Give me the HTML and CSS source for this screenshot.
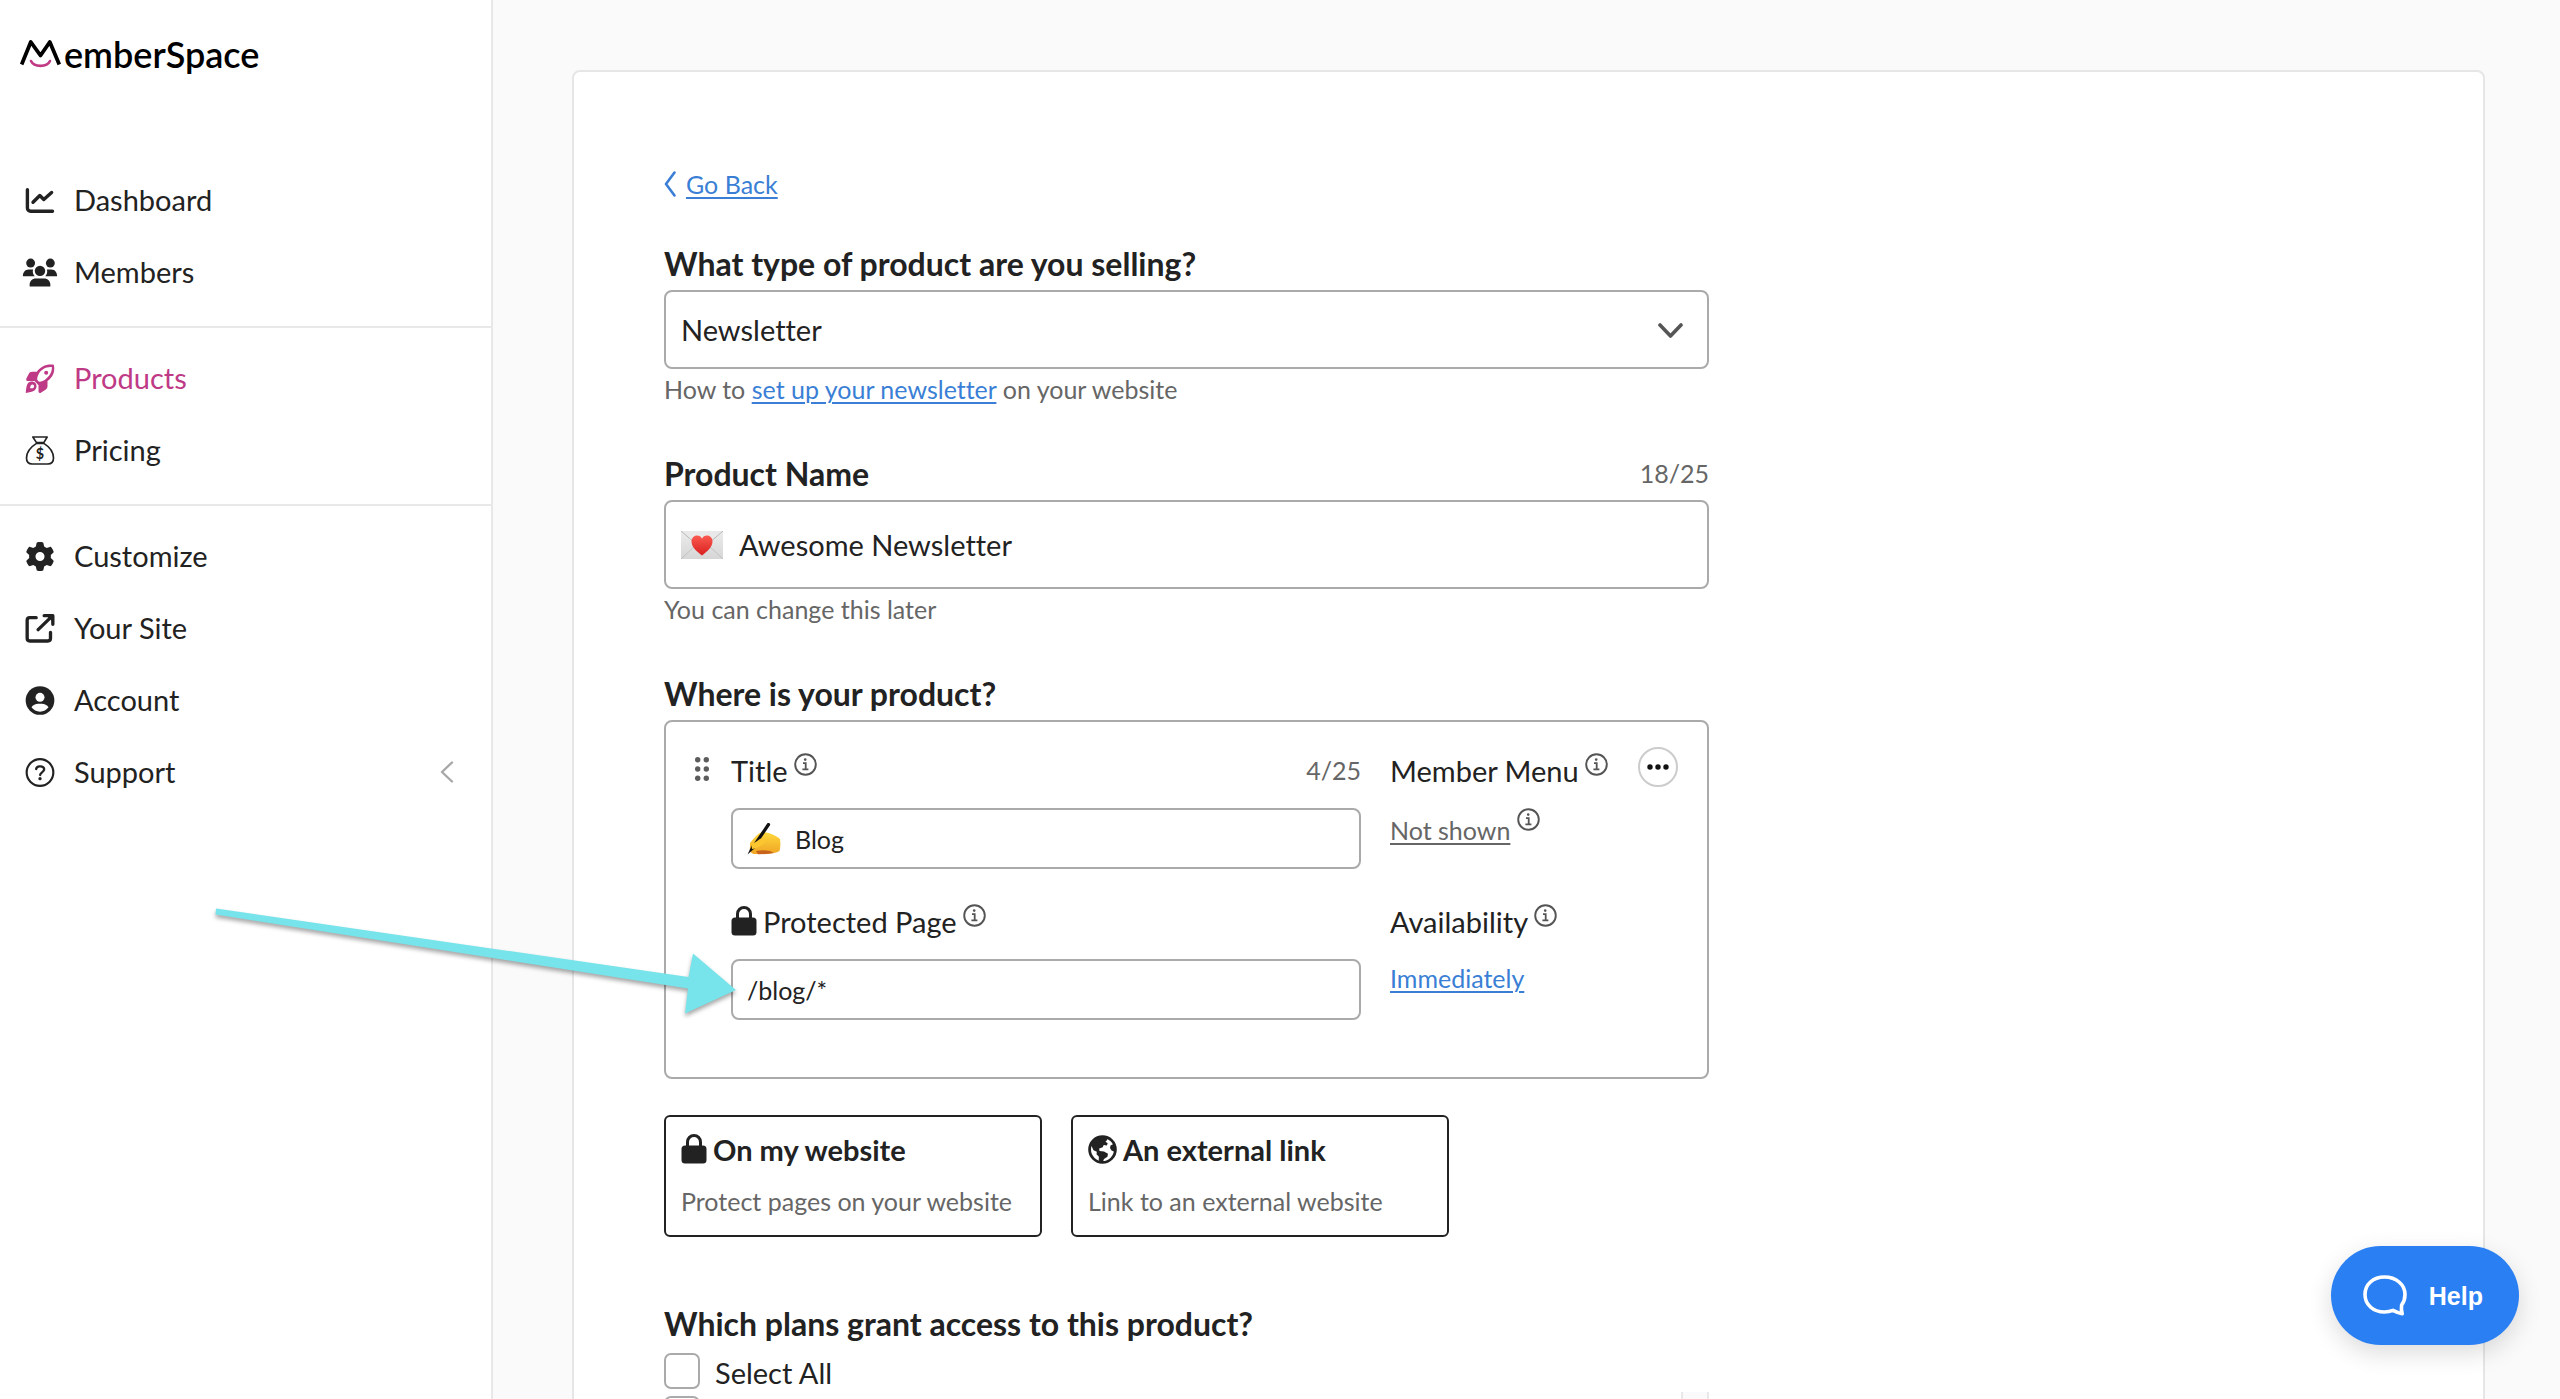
FILE: index.html
```html
<!DOCTYPE html>
<html lang="en">
<head>
<meta charset="utf-8">
<meta name="viewport" content="width=device-width, initial-scale=1">
<title>MemberSpace</title>
<link rel="stylesheet" href="styles.css">
</head>
<body>
<svg class="sprite" aria-hidden="true">
  <symbol id="info" viewBox="0 0 23 23">
    <circle cx="11.5" cy="11.5" r="10.3" fill="none" stroke="currentColor" stroke-width="1.9"/>
    <circle cx="11.2" cy="6.6" r="1.3" fill="currentColor"/>
    <path d="M9 10.2h2.7v6M8.4 16.4h6" fill="none" stroke="currentColor" stroke-width="1.8"/>
  </symbol>
  <symbol id="lock" viewBox="0 0 26 30">
    <path d="M6.5 13V8a6.5 6.5 0 0 1 13 0v5" fill="none" stroke="currentColor" stroke-width="3"/>
    <rect x="0.500" y="11.500" width="25" height="18" rx="3.500" fill="currentColor"/>
  </symbol>
</svg>
<div class="app">
  <aside class="sidebar">
    <a class="logo" href="#">
      <svg class="logo-mark" viewBox="0 0 41 28" aria-hidden="true">
        <path d="M1.600 24.500 10.800 2 20.500 15.500 29.800 2 39.300 24.500" fill="none" stroke="#000" stroke-width="3.800" stroke-linejoin="round"/>
        <path d="M11 21c3 6.500 16 6.500 19 0" fill="none" stroke="#c03a85" stroke-width="2.600" stroke-linecap="round"/>
      </svg>
      <span class="logo-text">emberSpace</span>
    </a>
    <nav class="nav">
      <ul class="nav-group">
        <li><a class="nav-item" href="#">
          <svg class="nav-icon" viewBox="0 0 29 29"><path d="M1.900 3.700V22a3.200 3.200 0 0 0 3.200 3.200H27M7.500 16.300l6.800-6.800 4 4 7.800-7" fill="none" stroke="currentColor" stroke-width="3.400" stroke-linecap="round" stroke-linejoin="round"/></svg>
          <span>Dashboard</span></a></li>
        <li><a class="nav-item" href="#">
          <svg class="nav-icon" viewBox="0 0 36 30"><g fill="currentColor"><circle cx="8.300" cy="5.200" r="4.600"/><circle cx="28.700" cy="5.200" r="4.600"/><circle cx="18" cy="13.300" r="5.400"/><path d="M.3 19c0-4 2.200-7 6-7h4.500c-.7 2.800 0 5.200 1.700 7zM35.700 19c0-4-2.200-7-6-7h-4.500c.7 2.800 0 5.200-1.700 7zM7.300 29.500v-2c0-3.600 2.700-6.300 6.300-6.300h8.800c3.600 0 6.300 2.700 6.300 6.300v2z"/></g></svg>
          <span>Members</span></a></li>
      </ul>
      <ul class="nav-group">
        <li><a class="nav-item active" href="#">
          <svg class="nav-icon" viewBox="0 0 87 87"><path d="M85 2C62-1 46 7 34 23H20c-6 0-8 2-10 6L3 43c-2 4 0 8 4 8h20l12 13v18c0 4 3 6 7 4l14-9c4-2 6-5 6-11V51C80 40 90 26 85 2z" fill="currentColor"/><path d="M79 9C60 8 47 17 40 29c-4 7-5 13-5 17 0 3 5 8 9 7 6-1 12-4 17-8C72 36 80 25 79 9z" fill="#fff"/><circle cx="62" cy="26" r="6" fill="currentColor"/><path d="M8 57c6-6 16-6 22 0 5 6 4 16-2 22-6 5-18 7-27 8 0-9 2-25 7-30zm6 16c4 0 7 0 10-2 3-3 2-8-1-9-6-1-9 4-9 11z" fill="currentColor" fill-rule="evenodd"/></svg>
          <span>Products</span></a></li>
        <li><a class="nav-item" href="#">
          <svg class="nav-icon" viewBox="0 0 87 87"><g fill="none" stroke="currentColor" stroke-width="5" stroke-linejoin="round"><path d="M22 3h43L55 20H33zM33 22C17 32 3 47 3 66c0 12 7 18 17 18h47c10 0 17-6 17-18 0-19-13-34-29-44z"/></g><text x="43.500" y="70" text-anchor="middle" font-family="Lato, sans-serif" font-weight="700" font-size="43" fill="currentColor">$</text></svg>
          <span>Pricing</span></a></li>
      </ul>
      <ul class="nav-group">
        <li><a class="nav-item" href="#">
          <svg class="nav-icon" viewBox="0 0 512 512"><path fill="currentColor" d="M495.900 166.600c3.200 8.700 .5 18.400-6.400 24.600l-43.300 39.400c1.100 8.300 1.700 16.800 1.700 25.400s-.6 17.100-1.700 25.400l43.300 39.400c6.900 6.200 9.600 15.900 6.400 24.600c-4.400 11.900-9.700 23.300-15.800 34.300l-4.700 8.100c-6.600 11-14 21.400-22.100 31.200c-5.900 7.200-15.700 9.600-24.500 6.800l-55.700-17.700c-13.400 10.300-28.200 18.900-44 25.400l-12.500 57.100c-2 9.100-9 16.300-18.200 17.800c-13.800 2.300-28 3.500-42.500 3.500s-28.700-1.200-42.500-3.500c-9.200-1.500-16.200-8.700-18.200-17.800l-12.500-57.100c-15.800-6.500-30.600-15.100-44-25.400L83.100 425.900c-8.800 2.800-18.600 .3-24.500-6.800c-8.100-9.800-15.500-20.200-22.100-31.200l-4.700-8.100c-6.100-11-11.400-22.400-15.800-34.300c-3.200-8.700-.5-18.400 6.400-24.600l43.300-39.400C64.600 273.100 64 264.600 64 256s.6-17.100 1.700-25.400L22.400 191.200c-6.900-6.200-9.600-15.900-6.400-24.600c4.400-11.900 9.700-23.300 15.800-34.300l4.700-8.100c6.600-11 14-21.400 22.100-31.200c5.900-7.200 15.700-9.600 24.500-6.800l55.700 17.700c13.400-10.300 28.200-18.900 44-25.400l12.500-57.100c2-9.100 9-16.300 18.200-17.800C227.300 1.200 241.500 0 256 0s28.700 1.200 42.500 3.500c9.200 1.500 16.200 8.700 18.200 17.800l12.500 57.100c15.800 6.500 30.600 15.100 44 25.400l55.700-17.700c8.800-2.800 18.600-.3 24.500 6.800c8.100 9.800 15.500 20.200 22.100 31.200l4.700 8.100c6.100 11 11.400 22.400 15.800 34.300zM256 336a80 80 0 1 0 0-160 80 80 0 1 0 0 160z"/></svg>
          <span>Customize</span></a></li>
        <li><a class="nav-item" href="#">
          <svg class="nav-icon" viewBox="0 0 87 87"><g fill="none" stroke="currentColor" stroke-width="10" stroke-linecap="round" stroke-linejoin="round"><path d="M32 11H13q-8 0-8 8v54q0 8 8 8h54q8 0 8-8V55M38 47 79 7M56 5h26v26"/></g><path d="M60 2h25v25z" fill="currentColor"/></svg>
          <span>Your Site</span></a></li>
        <li><a class="nav-item" href="#">
          <svg class="nav-icon" viewBox="0 0 87 87"><circle cx="43.500" cy="43.500" r="43" fill="currentColor"/><circle cx="43.500" cy="34" r="13.500" fill="#fff"/><path d="M18 64c4-7 12-11 20-11h11c8 0 16 4 20 11-6 8-15 13-25.500 13S24 72 18 64z" fill="#fff"/></svg>
          <span>Account</span></a></li>
        <li><a class="nav-item" href="#">
          <svg class="nav-icon" viewBox="0 0 87 87"><circle cx="43.500" cy="43.500" r="40" fill="none" stroke="currentColor" stroke-width="6.500"/><path d="M32 33c1-6 5-8 10-8h3c6 0 11 4 11 9 0 9-12 9-12 17" fill="none" stroke="currentColor" stroke-width="7" stroke-linecap="round"/><circle cx="43.500" cy="62" r="5" fill="currentColor"/></svg>
          <span>Support</span>
          <svg class="nav-caret" viewBox="0 0 14 22"><path d="M12 1.500 2 11l10 9.500" fill="none" stroke="currentColor" stroke-width="2.400" stroke-linecap="round" stroke-linejoin="round"/></svg></a></li>
      </ul>
    </nav>
  </aside>

  <main class="main">
    <form class="card">
      <div class="form">
        <div class="back">
          <svg class="back-icon" viewBox="0 0 12 26" aria-hidden="true"><path d="M10.500 1.500 2 13l8.500 11.500" fill="none" stroke="currentColor" stroke-width="2.600" stroke-linecap="round" stroke-linejoin="round"/></svg>
          <a href="#">Go Back</a>
        </div>

        <section class="field">
          <label class="heading" for="type">What type of product are you selling?</label>
          <div class="select-box">
            <select id="type"><option>Newsletter</option></select>
            <svg class="chevron" viewBox="0 0 25 15" aria-hidden="true"><path d="M2 2l10.500 11L23 2" fill="none" stroke="currentColor" stroke-width="3.600" stroke-linecap="round" stroke-linejoin="round"/></svg>
          </div>
          <p class="hint">How to <a href="#">set up your newsletter</a> on your website</p>
        </section>

        <section class="field">
          <div class="heading-row">
            <label class="heading" for="name">Product Name</label>
            <span class="count">18/25</span>
          </div>
          <div class="text-box large">
            <svg class="emoji-letter" viewBox="0 0 42 28" aria-hidden="true">
              <defs>
                <linearGradient id="paper" x2="0" y2="1"><stop stop-color="#ececec"/><stop offset="1" stop-color="#d6d6d6"/></linearGradient>
                <linearGradient id="red" x2="0" y2="1"><stop stop-color="#fb5a50"/><stop offset="1" stop-color="#d81f1f"/></linearGradient>
              </defs>
              <path fill="url(#paper)" d="M0 0h42v28H0z"/>
              <path d="M0 28 16 13M42 28 26 13" stroke="#c2c2c2"/>
              <path d="M0 0l21 18L42 0" fill="#e9e9e9" stroke="#b9b9b9"/>
              <path d="M21 24.500C15 20 10.500 15.500 10.500 10.500c0-3.500 2.500-6 5.500-6 2.200 0 4 1.200 5 3.200 1-2 2.800-3.200 5-3.200 3 0 5.500 2.500 5.500 6 0 5-4.500 9.500-10.500 14z" fill="url(#red)"/>
            </svg>
            <input id="name" type="text" value="Awesome Newsletter">
          </div>
          <p class="hint">You can change this later</p>
        </section>

        <section class="field">
          <h2 class="heading">Where is your product?</h2>
          <div class="page-card">
            <svg class="handle" viewBox="0 0 14 24" aria-hidden="true"><g fill="#5c5c5c"><circle cx="2.700" cy="2.700" r="2.700"/><circle cx="11.300" cy="2.700" r="2.700"/><circle cx="2.700" cy="12" r="2.700"/><circle cx="11.300" cy="12" r="2.700"/><circle cx="2.700" cy="21.300" r="2.700"/><circle cx="11.300" cy="21.300" r="2.700"/></g></svg>
            <div class="cell main-cell">
              <div class="label-row">
                <label for="title">Title</label>
                <svg class="info"><use href="#info"/></svg>
                <span class="count push">4/25</span>
              </div>
              <div class="text-box">
                <svg class="emoji-hand" viewBox="0 0 34 32" aria-hidden="true">
                  <defs><linearGradient id="skin" x2="0" y2="1"><stop stop-color="#ffd93b"/><stop offset="1" stop-color="#f0a524"/></linearGradient></defs>
                  <path d="M3 20C7 15 10 11 15 9c7 0 15 4 18 7 .7 5 .3 9-.5 12-3 2-8 2.500-12 3l-12 0C4 31 2 28 3 24z" fill="url(#skin)"/>
                  <path d="M9 28c5-1 9-1 14 0l4 2-8 1-8 .3z" fill="#c8631c"/>
                  <path d="M21.500 1.500 6 24.500" stroke="#111" stroke-width="3.200" stroke-linecap="round"/>
                  <path d="M5 22 .5 31.500 8 25z" fill="#111"/>
                  <path d="M4 20c5 1 8-5 12-5 4 1 2 6-3 8-3 2-6 3-8 3z" fill="#fbc62f"/>
                </svg>
                <input id="title" type="text" value="Blog">
              </div>
            </div>
            <div class="cell">
              <div class="label-row"><span>Member Menu</span><svg class="info"><use href="#info"/></svg></div>
              <div class="value with-info"><a class="muted" href="#">Not shown</a><svg class="info"><use href="#info"/></svg></div>
            </div>
            <button class="more" type="button" aria-label="More options"><svg viewBox="0 0 22 6"><g fill="#111"><circle cx="3" cy="3" r="2.700"/><circle cx="11" cy="3" r="2.700"/><circle cx="19" cy="3" r="2.700"/></g></svg></button>
            <div class="cell main-cell">
              <div class="label-row">
                <svg class="lock"><use href="#lock"/></svg>
                <label for="page">Protected Page</label>
                <svg class="info"><use href="#info"/></svg>
              </div>
              <div class="text-box"><input id="page" type="text" value="/blog/*"></div>
            </div>
            <div class="cell">
              <div class="label-row"><span>Availability</span><svg class="info"><use href="#info"/></svg></div>
              <div class="value"><a href="#">Immediately</a></div>
            </div>
          </div>
          <div class="choices">
            <button class="choice" type="button">
              <span class="choice-title"><svg class="lock"><use href="#lock"/></svg>On my website</span>
              <span class="choice-text">Protect pages on your website</span>
            </button>
            <button class="choice" type="button">
              <span class="choice-title"><svg class="globe" viewBox="0 0 29 29" aria-hidden="true"><circle cx="14.500" cy="14.500" r="12.900" fill="none" stroke="currentColor" stroke-width="2.800"/><path d="M1.500 13C2 6 8 .8 15 1.200l3 .6 1.500 2.700-2 2.300 2.200 1.500-.8 2.200-3.200-.6-1 2.400-3.500 1.200.3 2.500 4.500.5 4 2.200-.6 3-3.400 2.300-1.500 3.700-2 .5-1.800-3.200.2-3.200-2.400-2.600.3-2.500-3.300-1.500L3.500 11zM22.500 10.500l4-2 1.500 5-1 3.500-3.500-1.500-1.500-2.500z" fill="currentColor"/></svg>An external link</span>
              <span class="choice-text">Link to an external website</span>
            </button>
          </div>
        </section>

        <section class="plans">
          <h2 class="heading">Which plans grant access to this product?</h2>
          <label class="check"><input type="checkbox"><span>Select All</span></label>
          <div class="plan-list">
            <div class="plan-items"><input type="checkbox" aria-label="Plan"></div>
            <div class="track"></div>
          </div>
        </section>
      </div>
    </form>
  </main>

  <svg class="arrow" viewBox="0 0 560 160" aria-hidden="true"><path d="M16 28.500 488.500 97 493 73.500 536 110 485 133.500 488 108.500 15.500 34.500z" fill="#76e4ea"/></svg>

  <button class="help" type="button">
    <svg viewBox="0 0 44 41" aria-hidden="true"><path d="M21.500 2C10 2 2 9.500 2 19.500S10 37 21.500 37c3.200 0 6-.6 8.500-1.600 3 1.600 6 2.800 9.200 3.300-.9-3-1-6-.6-8.700 2.200-2.900 3.400-6.500 3.400-10.500C42 9.500 33 2 21.500 2z" fill="none" stroke="#fff" stroke-width="3.600" stroke-linejoin="round"/></svg>
    <span>Help</span>
  </button>
</div>
</body>
</html>
```
FILE: styles.css
```css
* { box-sizing: border-box; }

body {
  margin: 0;
  font-family: Lato, "Open Sans", sans-serif;
  font-size: 29px;
  line-height: 40px;
  font-variant-ligatures: none;
  color: #222;
  background: #fafafa;
}

h2, p, ul { margin: 0; padding: 0; }
ul { list-style: none; }
a { color: #3a7fd5; text-decoration-thickness: 2px; text-underline-offset: 3px; }
svg { display: block; flex: none; }
input, select, button { font: inherit; font-variant-ligatures: none; color: inherit; }
.sprite { position: absolute; width: 0; height: 0; }

.app { position: relative; display: flex; height: 100vh; overflow: hidden; }

/* Sidebar */
.sidebar { flex: none; width: 493px; background: #fff; border-right: 2px solid #e8e8e8; }
.logo { display: flex; align-items: center; gap: 3px; height: 72px; margin: 18px 20px 74px; color: #000; text-decoration: none; }
.logo-mark { width: 41px; height: 28px; }
.logo-text { font-size: 36px; font-weight: 600; }

.nav-group + .nav-group { margin-top: 18px; padding-top: 14px; border-top: 2px solid #e8e8e8; }
.nav-item { display: flex; align-items: center; gap: 16px; height: 72px; padding: 0 37px 0 22px; color: #222; text-decoration: none; }
.nav-item.active { color: #bf3a86; }
.nav-icon { width: 36px; height: 29px; }
.nav-caret { width: 14px; height: 22px; margin-left: auto; color: #a8a8a8; }

/* Main card */
.main { flex: 1; min-width: 0; padding: 70px 75px 0 79px; overflow: hidden; }
.card { padding: 93px 90px; background: #fff; border: 2px solid #e6e6e6; border-radius: 8px; }
.form { max-width: 1045px; }

.back { display: flex; align-items: center; gap: 10px; margin-bottom: 41px; font-size: 25px; line-height: 38px; color: #3a7fd5; }
.back-icon { width: 12px; height: 26px; }

.field { margin-bottom: 48px; }
.heading { display: block; margin-bottom: 6px; font-size: 32px; font-weight: 700; line-height: 40px; }
.heading-row { display: flex; justify-content: space-between; }
.count { font-size: 25px; line-height: 38px; color: #666; }
.hint { margin-top: 5px; padding-bottom: 2px; font-size: 25px; line-height: 30px; color: #666; }

.select-box { position: relative; }
.select-box select { display: block; width: 100%; height: 79px; padding: 0 15px; appearance: none; background: #fff; border: 2px solid #aaa; border-radius: 8px; }
.chevron { position: absolute; right: 26px; top: 33px; width: 25px; height: 15px; color: #555; pointer-events: none; }

.text-box { display: flex; align-items: center; gap: 14px; height: 61px; padding: 0 14px; font-size: 25px; background: #fff; border: 2px solid #aaa; border-radius: 8px; }
.text-box.large { gap: 16px; height: 89px; padding: 0 15px; font-size: 29px; }
.text-box input { flex: 1; min-width: 0; padding: 0; border: 0; outline: 0; background: transparent; }
.emoji-letter { width: 42px; height: 28px; }
.emoji-hand { width: 34px; height: 32px; }

/* Protected page card */
.page-card { display: grid; grid-template-columns: 36px minmax(0, 1fr) 248px 40px; gap: 29px 0; padding: 25px 29px 57px; border: 2px solid #aaa; border-radius: 8px; }
.handle { width: 14px; height: 24px; margin-top: 10px; }
.cell { padding-top: 4px; }
.main-cell { grid-column: 2; margin-right: 29px; }
.label-row { display: flex; gap: 6px; margin-bottom: 17px; white-space: nowrap; }
.info { width: 23px; height: 23px; margin-top: 2px; color: #555; }
.lock { width: 26px; height: 30px; margin-top: 4px; }
.push { margin-left: auto; }
.value { font-size: 25px; line-height: 38px; }
.with-info { display: flex; gap: 7px; line-height: 44px; }
.with-info .info { margin-top: 0; }
.muted { color: #666; }
.more { display: grid; place-items: center; width: 40px; height: 40px; padding: 0; background: #fff; border: 2px solid #ccc; border-radius: 50%; }
.more svg { width: 22px; height: 6px; }

.choices { display: flex; gap: 29px; margin-top: 36px; }
.choice { display: flex; flex-direction: column; gap: 11px; width: 378px; height: 122px; padding: 13px 15px; text-align: left; background: #fff; border: 2px solid #222; border-radius: 6px; }
.choice-title { display: flex; gap: 6px; font-weight: 700; }
.globe { width: 29px; height: 29px; margin-top: 5px; }
.choice-text { font-size: 25px; color: #666; white-space: nowrap; }

/* Plans */
.plans { padding-top: 19px; }
.plans input { width: 36px; height: 36px; margin: 0; appearance: none; background: #fff; border: 2px solid #aaa; border-radius: 7px; }
.check { display: flex; gap: 15px; height: 42px; padding-top: 3px; }
.plan-list { display: flex; justify-content: space-between; height: 280px; }
.plan-items { padding-top: 4px; }
.track { width: 28px; background: #fafafa; border: solid #e8e8e8; border-width: 0 2px; }

.arrow { position: absolute; left: 200px; top: 880px; width: 560px; height: 160px; filter: drop-shadow(0 3px 2px rgba(0, 0, 0, 0.35)); pointer-events: none; }

.help { position: absolute; right: 41px; bottom: 54px; display: flex; align-items: center; gap: 22px; height: 99px; padding: 0 36px 0 32px; font-family: "Liberation Sans", Arial, sans-serif; font-size: 25px; font-weight: 700; color: #fff; background: #2a7ff3; border: 0; border-radius: 50px; box-shadow: 0 8px 24px rgba(0, 0, 0, 0.14); }
.help svg { width: 44px; height: 41px; }
```
